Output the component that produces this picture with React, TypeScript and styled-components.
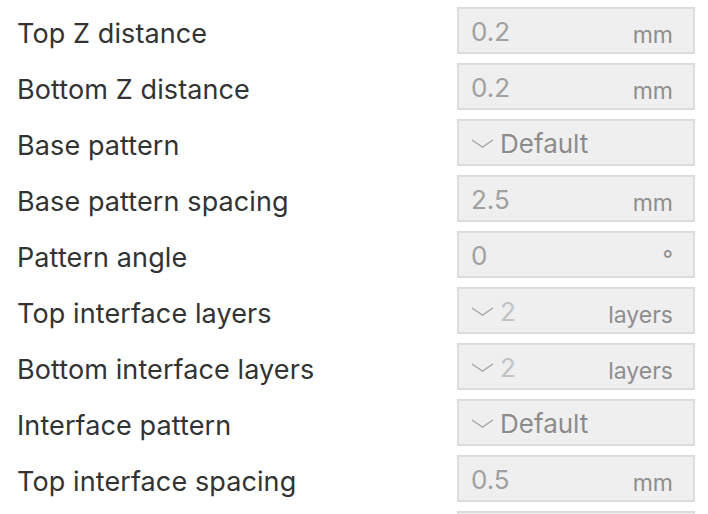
import styled, { createGlobalStyle } from 'styled-components';

const GlobalStyle = createGlobalStyle`
  html, body {
    margin: 0;
    padding: 0;
    background: #ffffff;
  }
  body {
    font-family: Inter, 'Liberation Sans', sans-serif;
    -webkit-font-smoothing: antialiased;
  }
`;

const Panel = styled.div`
  display: flex;
  flex-direction: column;
  gap: 9px;
  padding: 7px 13px 0 17px;
  width: 708px;
  height: 514px;
  box-sizing: border-box;
  overflow: hidden;
`;

const Row = styled.div`
  display: grid;
  grid-template-columns: 440px 238px;
  align-items: center;
  height: 47px;
  flex-shrink: 0;
`;

const Label = styled.span`
  font-size: 27px;
  color: #333333;
  padding-top: 5px;
  letter-spacing: 0.1px;
  white-space: nowrap;
`;

const Field = styled.div`
  display: flex;
  align-items: center;
  height: 47px;
  box-sizing: border-box;
  border: 2px solid #dcdcdc;
  background: #efefef;
  padding: 0 20px 0 12px;
`;

const Value = styled.span<{ $faint?: boolean; $dark?: boolean }>`
  font-size: 26px;
  color: ${(p) => (p.$dark ? '#8c8c8c' : p.$faint ? '#c2c2c2' : '#a0a0a0')};
  padding-top: 1px;
`;

const Unit = styled.span`
  margin-left: auto;
  font-size: 23px;
  color: #8e8e8e;
  padding-top: 8px;
`;

const Chevron = styled.svg`
  width: 23px;
  height: 9px;
  margin-right: 6px;
  margin-top: 2px;
  flex-shrink: 0;
`;

const Dropdown = () => (
  <Chevron viewBox="0 0 23 9">
    <path d="M1 1 L11.5 8 L22 1" fill="none" stroke="#a8a8a8" strokeWidth="1.5" />
  </Chevron>
);

type Setting = {
  label: string;
  value: string;
  unit?: string;
  select?: boolean;
  faint?: boolean;
};

const settings: Setting[] = [
  { label: 'Top Z distance', value: '0.2', unit: 'mm' },
  { label: 'Bottom Z distance', value: '0.2', unit: 'mm' },
  { label: 'Base pattern', value: 'Default', select: true },
  { label: 'Base pattern spacing', value: '2.5', unit: 'mm' },
  { label: 'Pattern angle', value: '0', unit: '°' },
  { label: 'Top interface layers', value: '2', unit: 'layers', select: true, faint: true },
  { label: 'Bottom interface layers', value: '2', unit: 'layers', select: true, faint: true },
  { label: 'Interface pattern', value: 'Default', select: true },
  { label: 'Top interface spacing', value: '0.5', unit: 'mm' },
  { label: 'Bottom interface spacing', value: '0.5', unit: 'mm' },
];

export default function App() {
  return (
    <>
      <GlobalStyle />
      <Panel>
        {settings.map((s) => (
          <Row key={s.label}>
            <Label>{s.label}</Label>
            <Field>
              {s.select && <Dropdown />}
              <Value $faint={s.faint} $dark={s.select && !s.faint}>
                {s.value}
              </Value>
              {s.unit && <Unit>{s.unit}</Unit>}
            </Field>
          </Row>
        ))}
      </Panel>
    </>
  );
}
